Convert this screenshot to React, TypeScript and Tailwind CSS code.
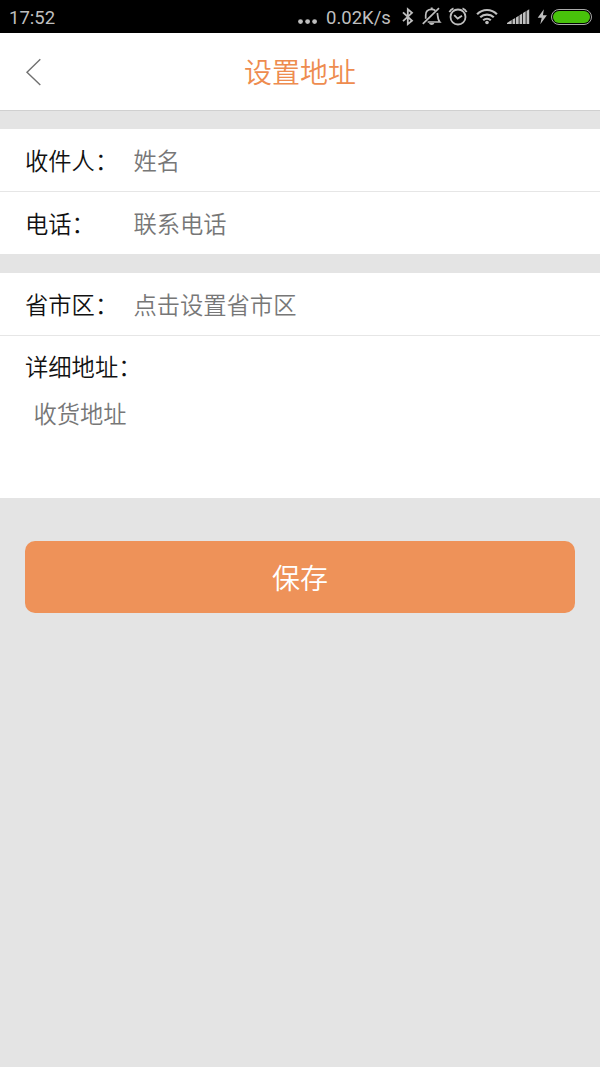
import React from 'react';

interface FieldRowProps {
  label: string;
  placeholder: string;
  className?: string;
}

const StatusBar: React.FC = () => (
  <div className="flex h-[33px] items-center justify-between bg-black pl-[9px] pr-2 font-['Roboto',sans-serif] text-[18.5px] font-normal text-[#bfbfbf]">
    <span className="mt-[3px]">17:52</span>
    <div className="flex h-full items-center">
      <svg className="mr-[9px] h-[33px] w-5" viewBox="0 0 20 33" fill="currentColor">
        <circle cx="3.5" cy="21.6" r="2.4" />
        <circle cx="10.6" cy="21.6" r="2.4" />
        <circle cx="17.6" cy="21.6" r="2.4" />
      </svg>
      <span className="mt-[3px] w-[66px] whitespace-nowrap">0.02K/s</span>
      {/* bluetooth */}
      <svg className="ml-[9px] h-[33px] w-[14px]" viewBox="0 0 14 33" fill="none" stroke="currentColor" strokeWidth="1.8">
        <path d="M2 12.3 L11 20.8 L6.8 24.2 V9.2 L11 12.8 L2 21.2" />
      </svg>
      {/* muted bell */}
      <svg className="ml-[7px] h-[33px] w-5" viewBox="0 0 20 33" fill="none" stroke="currentColor" strokeWidth="1.7">
        <path d="M3.7 18.8 V15.2 C3.7 11.5 6.1 9.4 9.6 9.4 C11 9.4 12.3 9.8 13.4 10.7 M15.3 13 C15.8 15 15.5 19.5 17.8 22 H5.7" />
        <path d="M0.8 23.8 L17 8.2" />
        <path d="M7 23 C7.7 25.6 11.7 25.6 12.4 23 Z" fill="currentColor" stroke="none" />
        <path d="M9.7 7.5 V9.6" strokeWidth="2" />
      </svg>
      {/* alarm clock */}
      <svg className="ml-[6px] h-[33px] w-5" viewBox="0 0 20 33" fill="none" stroke="currentColor" strokeWidth="1.8">
        <circle cx="10" cy="17" r="7.5" />
        <path d="M6.2 15.1 L9.7 18.6 L14 15.7" />
        <path d="M1.4 12.2 C2.2 10.3 3.4 9.1 5.5 8.3 M18.6 12.2 C17.8 10.3 16.6 9.1 14.5 8.3" />
      </svg>
      {/* wifi */}
      <svg className="ml-[8px] h-[33px] w-[22px]" viewBox="0 0 22 33" fill="none" stroke="currentColor" strokeWidth="2.2">
        <path d="M1.1 14.2 C6.6 8.6 15.4 8.6 20.9 14.2" />
        <path d="M4.2 17.3 C8 13.6 14 13.6 17.8 17.3" />
        <path d="M7.2 20.3 C9.4 18.3 12.6 18.3 14.8 20.3" />
        <circle cx="11" cy="22.5" r="1.8" fill="currentColor" stroke="none" />
      </svg>
      {/* signal */}
      <svg className="ml-[9px] h-[33px] w-[23px]" viewBox="0 0 23 33" fill="currentColor">
        <path d="M0 24 V23 L4.7 20 V24 Z M5.5 24 V19.6 L8.2 17.9 V24 Z M9 24 V17.4 L11.7 15.7 V24 Z M12.5 24 V15.2 L15.2 13.5 V24 Z M16 24 V13 L18.7 11.3 V24 Z M19.5 24 V10.9 L22.2 9.2 V24 Z" />
      </svg>
      {/* charging battery */}
      <svg className="ml-[7px] h-[33px] w-[10px]" viewBox="0 0 10 33" fill="currentColor">
        <path d="M6.9 9.2 L0.7 17.8 H4.7 L3.3 24.3 L9.9 15.2 H5.9 Z" />
      </svg>
      <div className="ml-[4px] h-4 w-[41px] rounded-full border-[1.5px] border-[#aaa] p-px">
        <div className="h-full rounded-full bg-[#48c20b]" />
      </div>
    </div>
  </div>
);

const FieldRow: React.FC<FieldRowProps> = ({ label, placeholder, className = '' }) => (
  <div className={`flex h-[62px] items-center pl-[25px] pt-[2px] ${className}`}>
    <span className="w-[108.4px] whitespace-nowrap text-[#111]">{label}</span>
    <span className="text-[#777]">{placeholder}</span>
  </div>
);

const App: React.FC = () => {
  return (
    <div className="min-h-[1067px] w-full bg-[#e4e4e4] font-['Noto_Sans_CJK_SC',sans-serif] text-[23.3px] font-[350] leading-none">
      <StatusBar />
      <header className="grid h-[78px] grid-cols-[1fr_auto_1fr] items-center border-b border-[#d0d0d0] bg-white">
        <svg className="ml-[25px] h-7 w-4" viewBox="0 0 16 28" fill="none" stroke="#707070" strokeWidth="1.4">
          <path d="M15.3 1.2 L2 14.2 L15.3 27" />
        </svg>
        <h1 className="pb-[2px] text-[28px] font-[350] text-[#ee8c4f]">设置地址</h1>
      </header>

      <section className="mt-[18px] bg-white">
        <FieldRow label="收件人：" placeholder="姓名" />
        <FieldRow label="电话：" placeholder="联系电话" className="h-[63px] border-t border-[#e6e6e6]" />
      </section>

      <section className="mt-[19px] bg-white">
        <FieldRow label="省市区：" placeholder="点击设置省市区" />
        <div className="h-[163px] border-t border-[#e6e6e6] pl-[25px] pt-[19px]">
          <p className="text-[#111]">详细地址：</p>
          <p className="mt-[23.7px] pl-[8.4px] text-[#777]">收货地址</p>
        </div>
      </section>

      <div className="px-[25px] pt-[43px]">
        <button className="h-[72px] w-full rounded-[10px] bg-[#ee9259] text-[28px] font-[350] text-white">保存</button>
      </div>
    </div>
  );
};

export default App;
